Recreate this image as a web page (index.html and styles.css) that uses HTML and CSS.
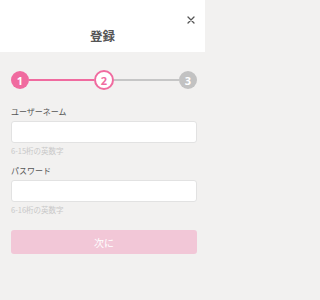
FILE: index.html
```html
<!DOCTYPE html>
<html lang="ja">
<head>
<meta charset="utf-8">
<link rel="stylesheet" href="styles.css">
</head>
<body>
<div class="page">
  <header class="header">
    <h1 class="title">登録</h1>
    <button class="close" aria-label="close">
      <svg width="8" height="8" viewBox="0 0 8 8"><path d="M1 1L7 7M7 1L1 7" stroke="#555" stroke-width="1.3" stroke-linecap="round" fill="none"/></svg>
    </button>
  </header>
  <main class="main">
    <div class="steps">
      <span class="step step-done">1</span>
      <span class="line line-on"></span>
      <span class="step step-current">2</span>
      <span class="line line-off"></span>
      <span class="step step-todo">3</span>
    </div>
    <div class="field">
      <label class="label">ユーザーネーム</label>
      <input class="input" type="text">
      <p class="hint">6-15桁の英数字</p>
    </div>
    <div class="field field-second">
      <label class="label">パスワード</label>
      <input class="input" type="password">
      <p class="hint">6-16桁の英数字</p>
    </div>
    <button class="next">次に</button>
  </main>
</div>
</body>
</html>
```
FILE: styles.css
```css
html, body {
  margin: 0;
  padding: 0;
  background: #f2f1f0;
  font-family: "Noto Sans CJK JP", "Noto Sans", sans-serif;
}
.page {
  width: 205px;
  height: 300px;
  background: #f2f1f0;
}
.header {
  position: relative;
  height: 52px;
  background: #ffffff;
  box-sizing: border-box;
  padding-top: 29px;
}
.title {
  margin: 0;
  text-align: center;
  font-size: 12.5px;
  line-height: 14px;
  font-weight: 700;
  color: #555555;
}
.close {
  position: absolute;
  top: 16px;
  right: 10px;
  width: 8px;
  height: 8px;
  padding: 0;
  border: 0;
  background: none;
  display: flex;
}
.main {
  padding: 19px 8px 0 11px;
}
.steps {
  display: flex;
  align-items: center;
  height: 18px;
}
.step {
  width: 18px;
  height: 18px;
  border-radius: 50%;
  box-sizing: border-box;
  display: flex;
  align-items: center;
  justify-content: center;
  font-family: "Open Sans", "Liberation Sans", sans-serif;
  font-weight: 700;
  font-size: 11px;
  line-height: 1;
  color: #ffffff;
  flex: none;
}
.step-done {
  background: #f06b9f;
}
.step-current {
  width: 20px;
  height: 20px;
  background: #ffffff;
  border: 2px solid #f06b9f;
  color: #f06b9f;
}
.step-todo {
  background: #c2c2c2;
}
.line {
  flex: 1;
  height: 2px;
}
.line-on {
  background: #f06b9f;
}
.line-off {
  background: #c6c6c6;
}
.field {
  display: flex;
  flex-direction: column;
  margin-top: 18px;
}
.field-second {
  margin-top: 10px;
}
.label {
  font-size: 8px;
  line-height: 10px;
  color: #555555;
  margin-bottom: 4px;
}
.input {
  box-sizing: border-box;
  height: 22px;
  width: 186px;
  margin: 0;
  border: 1px solid #e2e2e2;
  border-radius: 3px;
  background: #ffffff;
  outline: none;
}
.hint {
  margin: 3px 0 0;
  font-size: 7.5px;
  line-height: 10px;
  color: #c8c8c8;
}
.next {
  display: block;
  margin-top: 15px;
  width: 186px;
  height: 24px;
  border: 0;
  border-radius: 3px;
  background: #f2c7d7;
  color: #ffffff;
  font-family: "Noto Sans CJK JP", sans-serif;
  font-size: 10px;
  padding: 0;
}
```
